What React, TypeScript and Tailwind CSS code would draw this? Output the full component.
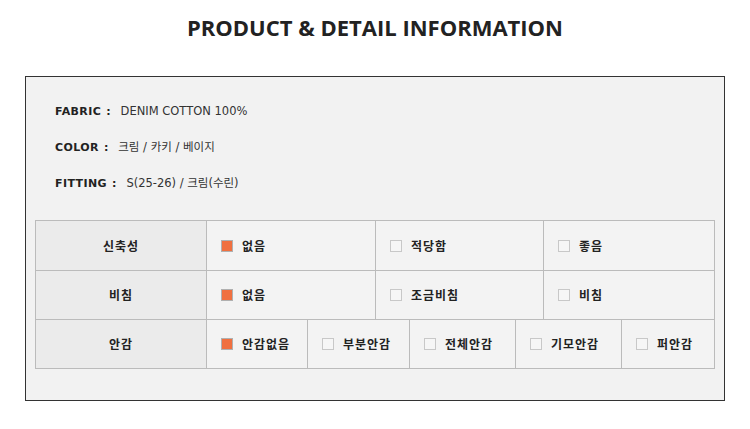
import React from "react";

const kr = { fontFamily: '"Noto Sans CJK KR", "DejaVu Sans", sans-serif' };

function Box({ checked }: { checked?: boolean }) {
  return checked ? (
    <span className="inline-block w-[12px] h-[12px] bg-[#f07040] border border-[#b0b0b0] shrink-0" />
  ) : (
    <span className="inline-block w-[12px] h-[12px] bg-[#f6f6f6] border border-[#c8c8c8] shrink-0" />
  );
}

function Opt({ label, checked, w }: { label: string; checked?: boolean; w: string }) {
  return (
    <div className={`${w} h-full border-r border-[#bbbbbb] bg-[#f3f3f3] flex items-center pl-[14px] gap-[9px]`}>
      <Box checked={checked} />
      <span className="text-[12px] font-bold text-[#222] leading-none tracking-[1px]" style={kr}>
        {label}
      </span>
    </div>
  );
}

function Head({ label }: { label: string }) {
  return (
    <div className="w-[171px] h-full border-r border-[#bbbbbb] bg-[#ebebeb] flex items-center justify-center">
      <span className="text-[12px] font-bold text-[#222] leading-none tracking-[1px]" style={kr}>
        {label}
      </span>
    </div>
  );
}

function Info({ label, value }: { label: string; value: string }) {
  return (
    <div className="h-[36px] flex items-center text-[11px] text-[#222]" style={{ fontFamily: '"DejaVu Sans", "Noto Sans CJK KR", sans-serif' }}>
      <span className="font-bold tracking-[0.4px]">{label}</span>
      <span className="font-bold ml-[5px]">:</span>
      <span className="ml-[10px] text-[11.5px] text-[#333]">{value}</span>
    </div>
  );
}

export default function App() {
  return (
    <div className="w-[750px] h-[429px] bg-white">
      <div className="h-[76px] pt-[11px] text-center">
        <h1
          className="text-[22px] font-bold text-[#222] leading-[32px]"
          style={{ fontFamily: '"Open Sans", sans-serif' }}
        >
          PRODUCT &amp; DETAIL INFORMATION
        </h1>
      </div>
      <div className="ml-[25px] w-[700px] h-[325px] border border-[#333] bg-[#f2f2f2] pt-[17px] px-[9px]">
        <div className="pl-[20px]">
          <Info label="FABRIC" value="DENIM COTTON 100%" />
          <Info label="COLOR" value="크림 / 카키 / 베이지" />
          <Info label="FITTING" value="S(25-26) / 크림(수린)" />
        </div>
        <div className="mt-[18px] w-[680px] border-t border-l border-[#bbbbbb]">
          <div className="h-[50px] flex border-b border-[#bbbbbb]">
            <Head label="신축성" />
            <Opt w="w-[169px]" label="없음" checked />
            <Opt w="w-[168px]" label="적당함" />
            <Opt w="w-[171px]" label="좋음" />
          </div>
          <div className="h-[49px] flex border-b border-[#bbbbbb]">
            <Head label="비침" />
            <Opt w="w-[169px]" label="없음" checked />
            <Opt w="w-[168px]" label="조금비침" />
            <Opt w="w-[171px]" label="비침" />
          </div>
          <div className="h-[49px] flex border-b border-[#bbbbbb]">
            <Head label="안감" />
            <Opt w="w-[101px]" label="안감없음" checked />
            <Opt w="w-[102px]" label="부분안감" />
            <Opt w="w-[106px]" label="전체안감" />
            <Opt w="w-[106px]" label="기모안감" />
            <Opt w="w-[93px]" label="퍼안감" />
          </div>
        </div>
      </div>
    </div>
  );
}
